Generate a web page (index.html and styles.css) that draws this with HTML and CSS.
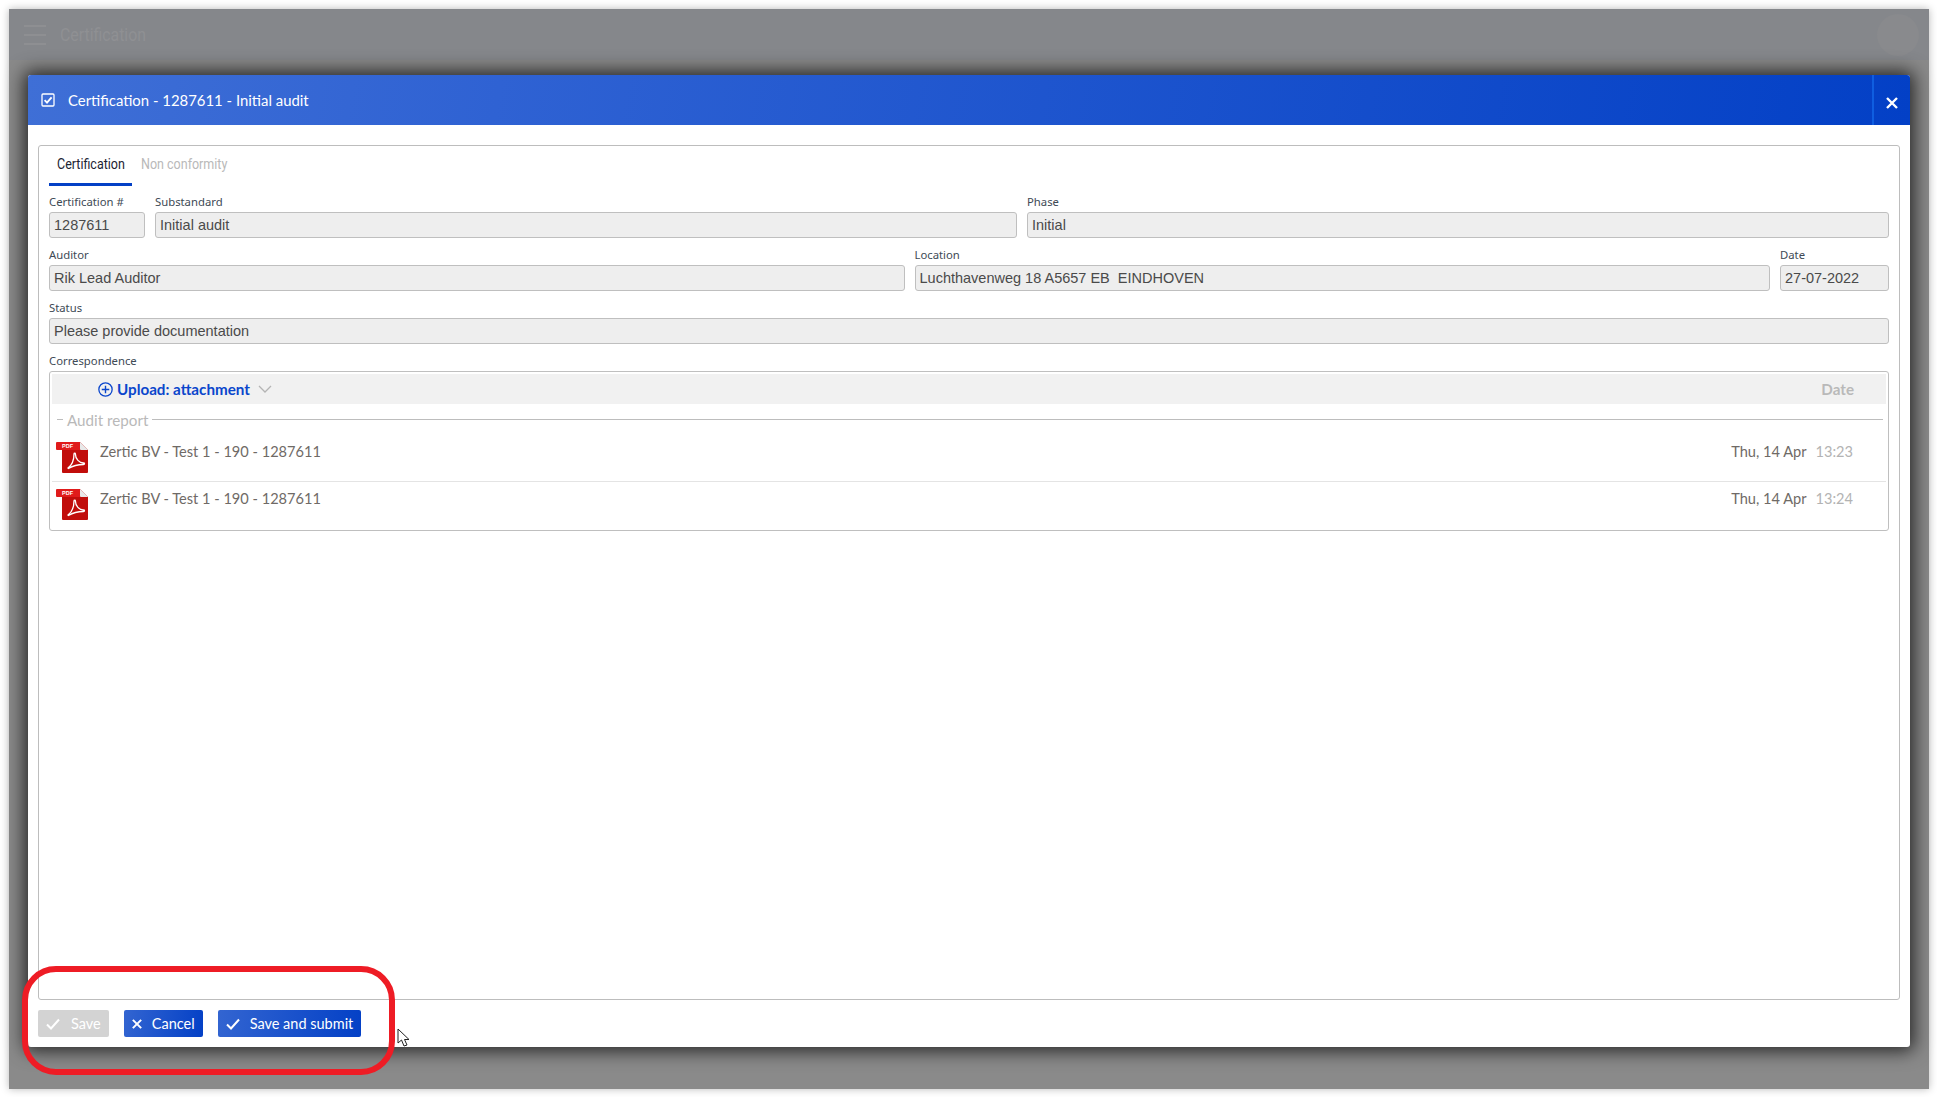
FILE: index.html
```html
<!DOCTYPE html>
<html lang="en">
<head>
<meta charset="utf-8">
<title>Certification</title>
<link rel="stylesheet" href="styles.css">
</head>
<body>
<div class="screen">
  <header class="topbar">
    <div class="hamburger"><span></span><span></span><span></span></div>
    <div class="topbar-title">Certification</div>
    <div class="avatar"></div>
  </header>

  <section class="dialog">
    <div class="dialog-head">
      <svg class="head-check" viewBox="0 0 14 14" width="14" height="14">
        <rect x="1" y="1" width="12" height="12" rx="1" fill="none" stroke="#fff" stroke-width="1.3"/>
        <path d="M3.6 7.2 6 9.6 10.6 4.4" fill="none" stroke="#fff" stroke-width="1.9"/>
      </svg>
      <div class="head-title">Certification - 1287611 - Initial audit</div>
      <div class="head-close">
        <svg viewBox="0 0 12 12" width="12" height="12"><path d="M1 1 11 11M11 1 1 11" stroke="#fff" stroke-width="2.4"/></svg>
      </div>
    </div>

    <div class="dialog-body">
      <div class="panel">
        <div class="tabs">
          <div class="tab tab-active"><span>Certification</span></div>
          <div class="tab"><span>Non conformity</span></div>
        </div>

        <div class="row row-first">
          <div class="field f-cert"><label>Certification #</label><div class="input">1287611</div></div>
          <div class="field f-grow"><label>Substandard</label><div class="input">Initial audit</div></div>
          <div class="field f-grow f-phase"><label>Phase</label><div class="input">Initial</div></div>
        </div>
        <div class="row">
          <div class="field f-grow"><label>Auditor</label><div class="input">Rik Lead Auditor</div></div>
          <div class="field f-grow"><label>Location</label><div class="input">Luchthavenweg 18 A5657 EB&nbsp; EINDHOVEN</div></div>
          <div class="field f-date"><label>Date</label><div class="input">27-07-2022</div></div>
        </div>
        <div class="row">
          <div class="field f-grow"><label>Status</label><div class="input">Please provide documentation</div></div>
        </div>

        <div class="corr">
          <label>Correspondence</label>
          <div class="corr-box">
            <div class="corr-head">
              <div class="upload">
                <svg viewBox="0 0 14 14" width="15" height="15"><circle cx="7" cy="7" r="6.2" fill="none" stroke="#0a46cc" stroke-width="1.2"/><path d="M7 3.5v7M3.5 7h7" stroke="#0a46cc" stroke-width="1.3"/></svg>
                <span>Upload: attachment</span>
                <svg class="chev" viewBox="0 0 14 8" width="14" height="8"><path d="M1 1 7 7 13 1" fill="none" stroke="#b4b4b4" stroke-width="1.3"/></svg>
              </div>
              <div class="corr-date">Date</div>
            </div>
            <div class="legend"><i class="dash"></i><span>Audit report</span><i class="line"></i></div>
            <div class="doc">
              <svg class="pdf" viewBox="0 0 32 32" width="32" height="32">
                <path d="M6 1H24L32 9V31a1 1 0 0 1-1 1H7a1 1 0 0 1-1-1Z" fill="#c10d0b"/>
                <path d="M24 1 32 9H25a1 1 0 0 1-1-1Z" fill="#e8e8e8"/>
                <path d="M0 2a1 1 0 0 1 1-1H24V9H1a1 1 0 0 1-1-1Z" fill="#e01b1b"/>
                <text class="pdf-text" x="6" y="7">PDF</text>
                <path d="M12 27C16 24 18 18 18 13c0-1 1.400-1 1.400 0 0 5 4 9 8 9 1.500 0 1.500 1.500 0 1.500-6 0-10 1-15 4Z" fill="none" stroke="#fff" stroke-width="1.300"/>
              </svg>
              <div class="doc-name">Zertic BV - Test 1 - 190 - 1287611</div>
              <div class="doc-date">Thu, 14 Apr</div>
              <div class="doc-time">13:23</div>
            </div>
            <div class="doc doc-next">
              <svg class="pdf" viewBox="0 0 32 32" width="32" height="32">
                <path d="M6 1H24L32 9V31a1 1 0 0 1-1 1H7a1 1 0 0 1-1-1Z" fill="#c10d0b"/>
                <path d="M24 1 32 9H25a1 1 0 0 1-1-1Z" fill="#e8e8e8"/>
                <path d="M0 2a1 1 0 0 1 1-1H24V9H1a1 1 0 0 1-1-1Z" fill="#e01b1b"/>
                <text class="pdf-text" x="6" y="7">PDF</text>
                <path d="M12 27C16 24 18 18 18 13c0-1 1.400-1 1.400 0 0 5 4 9 8 9 1.500 0 1.500 1.500 0 1.500-6 0-10 1-15 4Z" fill="none" stroke="#fff" stroke-width="1.300"/>
              </svg>
              <div class="doc-name">Zertic BV - Test 1 - 190 - 1287611</div>
              <div class="doc-date">Thu, 14 Apr</div>
              <div class="doc-time">13:24</div>
            </div>
          </div>
        </div>
      </div>

      <div class="actions">
        <button class="btn btn-off" type="button">
          <svg viewBox="0 0 14 12" width="14" height="12"><path d="M1 6.500 5 10.500 13 1.500" fill="none" stroke="#fff" stroke-width="2"/></svg>
          <span>Save</span>
        </button>
        <button class="btn" type="button">
          <svg viewBox="0 0 12 12" width="10" height="10"><path d="M1 1 11 11M11 1 1 11" stroke="#fff" stroke-width="2.400"/></svg>
          <span>Cancel</span>
        </button>
        <button class="btn" type="button">
          <svg viewBox="0 0 14 12" width="14" height="12"><path d="M1 6.500 5 10.500 13 1.500" fill="none" stroke="#fff" stroke-width="2"/></svg>
          <span>Save and submit</span>
        </button>
      </div>
    </div>
  </section>
</div>

<div class="annotation"></div>
<svg class="cursor" viewBox="0 0 13 20" width="13" height="20">
  <path d="M1 1V15L4.500 12 7 18 10 17 7.500 11.500H12Z" fill="#fff" stroke="#222" stroke-width="1"/>
</svg>
</body>
</html>
```
FILE: styles.css
```css
* { box-sizing: border-box; }
html, body { margin: 0; padding: 0; height: 100%; }
body { background: #fff; overflow: hidden; font-family: "Lato", sans-serif; position: relative; }

.screen {
  position: relative;
  margin: 9px;
  width: 1920px;
  height: 1080px;
  background: #8a8a8a;
  box-shadow: 0 0 8px rgba(0,0,0,.28);
}
.topbar {
  height: 51px;
  background: #85878b;
  display: flex;
  align-items: center;
  padding: 0 10px 0 15px;
}
.hamburger { width: 22px; display: flex; flex-direction: column; gap: 7px; }
.hamburger span { height: 2px; background: #8e8f92; display: block; }
.topbar-title {
  margin-left: 14px;
  font: 400 18px "Roboto", sans-serif;
  color: #8f9093;
  transform: scaleX(.88);
  transform-origin: left center;
}
.avatar { margin-left: auto; width: 42px; height: 42px; border-radius: 50%; background: #898a8d; }

.dialog {
  position: absolute;
  left: 19px;
  top: 66px;
  width: 1882px;
  height: 972px;
  background: #fff;
  border-radius: 3px;
  display: flex;
  flex-direction: column;
  box-shadow: 0 0 18px 4px rgba(0,0,0,.72);
}
.dialog-head {
  height: 50px;
  flex: none;
  display: flex;
  align-items: center;
  padding-left: 13px;
  color: #fff;
  background: linear-gradient(100deg, #3f6fd6 0%, #2f62d3 25%, #0340c6 100%);
  border-radius: 3px 3px 0 0;
}
.head-check { flex: none; }
.head-title { margin-left: 13px; font-size: 14.9px; }
.head-close {
  margin-left: auto;
  width: 38px;
  height: 50px;
  border-left: 2px solid #0f5ee0;
  display: flex;
  align-items: center;
  justify-content: center;
  padding-top: 6px;
}

.dialog-body { flex: 1; display: flex; flex-direction: column; padding: 20px 10px 10px; min-height: 0; }
.panel {
  height: 855px;
  flex: none;
  border: 1px solid #bdbdbd;
  border-radius: 3px;
  padding: 0 10px;
}
.tabs { display: flex; height: 40px; }
.tab {
  width: 83px;
  height: 40px;
  padding: 10px 0 0 8px;
  font: 400 13.9px "Roboto", sans-serif;
  color: #b9b9b9;
  white-space: nowrap;
}
.tab span { display: inline-block; transform: scaleX(.9); transform-origin: left center; }
.tab-active { color: #1c2433; border-bottom: 3px solid #0340c6; }
.tab + .tab { padding-left: 9px; width: 100px; }

.row { display: flex; gap: 10px; margin-top: 5px; height: 48px; }
.row-first { margin-top: 5px; height: 52px; padding-top: 4px; }
.field { display: flex; flex-direction: column; min-width: 0; }
.f-grow { flex: 1 1 0; }
.f-cert { width: 96px; flex: none; }
.f-date { width: 109px; flex: none; }
label { display: block; font: 400 11.3px/14px "Noto Sans", sans-serif; color: #404a55; height: 17px; }
.input {
  height: 26px;
  background: #eeeeee;
  border: 1px solid #bfbfbf;
  border-radius: 3px;
  padding: 0 4px;
  font: 400 14.5px/24px "Liberation Sans", sans-serif;
  color: #4a4a4a;
  white-space: nowrap;
  overflow: hidden;
}

.corr label { height: 16px; line-height: 11px; margin-top: 6px; }
.corr-box {
  height: 160px;
  border: 1px solid #bfbfbf;
  border-radius: 3px;
  padding: 2px;
}
.corr-head {
  height: 30px;
  background: #f1f1f1;
  display: flex;
  align-items: center;
  padding-left: 46px;
  padding-right: 32px;
}
.upload { display: flex; align-items: center; gap: 4px; font-weight: 700; font-size: 15.2px; color: #0a46cc; }
.chev { margin-left: 4px; }
.corr-date { margin-left: auto; font-weight: 700; font-size: 15.2px; color: #b9b9b9; }
.legend { display: flex; align-items: center; height: 20px; margin: 5px 3px 0 5px; font-size: 15.2px; color: #b9b9b9; }
.legend span { margin: 0 4px; position: relative; top: 1px; }
.dash { width: 6px; height: 1px; background: #bdbdbd; }
.line { flex: 1; height: 1px; background: #bdbdbd; }
.doc { display: flex; height: 52px; padding: 13px 33px 0 5px; font-size: 14.6px; color: #6f6a66; }
.doc-next { border-top: 1px solid #e4e4e4; padding-top: 7px; height: 48px; }
.pdf { flex: none; margin-top: -1px; margin-left: -1px; }
.pdf-text { font: 700 5.5px "Liberation Sans", sans-serif; fill: #fff; }
.doc-name { margin-left: 12px; line-height: 20px; }
.doc-date { margin-left: auto; line-height: 20px; color: #6f6a66; }
.doc-time { margin-left: 9px; line-height: 20px; color: #b3b3b3; }

.actions { display: flex; gap: 15px; margin-top: 10px; }
.btn {
  height: 27px;
  border: 0;
  border-radius: 2px;
  background: linear-gradient(100deg, #3365d1, #0340c6);
  color: #fff;
  font: 400 14.5px "Lato", sans-serif;
  display: flex;
  align-items: center;
  gap: 10px;
  padding: 0 8px;
}
.btn-off { background: #d3d3d3; gap: 11px; }

.annotation {
  position: absolute;
  left: 22px;
  top: 966px;
  width: 373px;
  height: 109px;
  border: 6px solid #ee1c25;
  border-radius: 34px;
  pointer-events: none;
}
.cursor { position: absolute; left: 397px; top: 1028px; }
```
